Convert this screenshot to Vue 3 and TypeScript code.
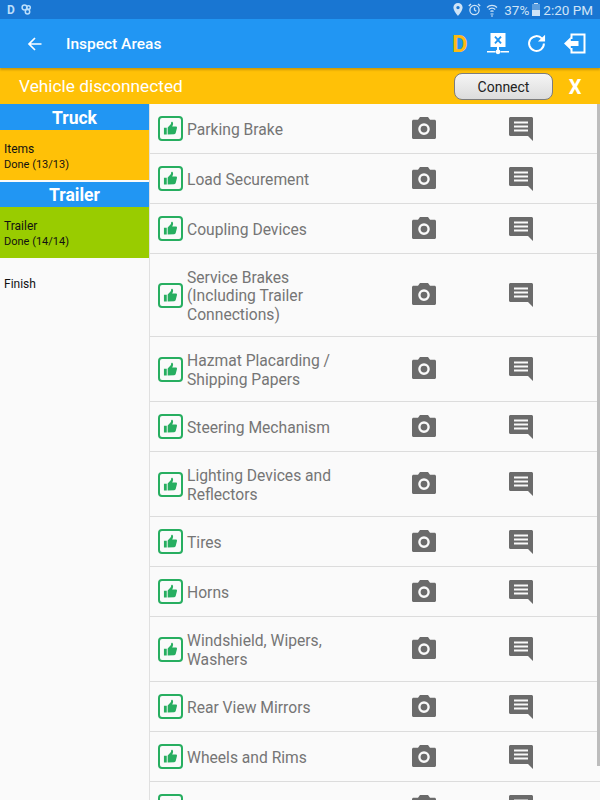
<script setup lang="ts">
interface Row { label: string[]; }
const rows: Row[] = [
  { label: ['Parking Brake'] },
  { label: ['Load Securement'] },
  { label: ['Coupling Devices'] },
  { label: ['Service Brakes', '(Including Trailer', 'Connections)'] },
  { label: ['Hazmat Placarding /', 'Shipping Papers'] },
  { label: ['Steering Mechanism'] },
  { label: ['Lighting Devices and', 'Reflectors'] },
  { label: ['Tires'] },
  { label: ['Horns'] },
  { label: ['Windshield, Wipers,', 'Washers'] },
  { label: ['Rear View Mirrors'] },
  { label: ['Wheels and Rims'] },
  { label: [''] },
];
</script>

<template>
  <div class="page">
    <div class="status">
      <div class="status-left">
        <span class="d">D</span>
        <svg width="11" height="11" viewBox="0 0 11 11" fill="none" stroke="#bbdefb" stroke-width="1.5"><circle cx="3.5" cy="3.5" r="2.4"/><circle cx="7.5" cy="3.5" r="1.8"/><circle cx="6.5" cy="7.8" r="2.2"/></svg>
      </div>
      <div class="status-right">
        <svg width="10" height="13" viewBox="0 0 10 13"><path fill="#cfe4f7" fill-rule="evenodd" d="M5 0a4.600 4.600 0 0 0-4.600 4.600C.4 8 5 13 5 13s4.600-5 4.600-8.400A4.600 4.600 0 0 0 5 0zm0 6.300a1.700 1.700 0 1 1 0-3.400 1.700 1.700 0 0 1 0 3.400z"/></svg>
        <svg class="alarm" width="13" height="13" viewBox="0 0 13 13" fill="none" stroke="#cfe4f7" stroke-width="1.3"><circle cx="6.500" cy="7" r="4.600"/><path d="M6.500 4.500V7l1.800 1.200M.8 3 3 1M12.200 3 10 1"/></svg>
        <svg class="wifi" width="12" height="14" viewBox="0 0 12 14" fill="none" stroke="#cfe4f7" stroke-width="1.200"><path d="M1 4.500a7 7 0 0 1 10 0M2.800 6.500a4.500 4.500 0 0 1 6.400 0M4.500 8.500a2 2 0 0 1 3 0"/><path d="M4.500 11h3M5 13h2"/></svg>
        <span class="pct">37%</span>
        <span class="battery"><span class="cap"></span><span class="cell"><span class="fill"></span></span></span>
        <span class="clock">2:20 PM</span>
      </div>
    </div>

    <header class="toolbar">
      <svg class="back" width="16" height="16" viewBox="0 0 16 16" fill="none" stroke="#fff" stroke-width="1.700"><path d="M14.500 8H2M8 2 2 8l6 6"/></svg>
      <span class="title">Inspect Areas</span>
      <span class="spacer"></span>
      <span class="big-d">D</span>
      <svg class="net" width="22" height="22" viewBox="0 0 22 22">
        <path fill="#fff" fill-rule="evenodd" d="M3.500 0h15v14h-15zM7.300 4.200l2.500 2.800-2.500 2.800 1.300 1.300 2.400-2.700 2.400 2.700 1.300-1.300-2.500-2.800 2.500-2.800-1.300-1.300L11 5.600 8.600 2.900z"/>
        <path fill="#fff" d="M10 14h2v3.500h-2zM0 18h8.500v1.500H0zM13.500 18H22v1.500h-8.500z"/><circle cx="11" cy="18.800" r="2.400" fill="#fff"/>
      </svg>
      <svg class="refresh" width="19" height="19" viewBox="0 0 20 20" fill="none" stroke="#fff" stroke-width="2.100"><path d="M15.800 4.800A7.800 7.800 0 1 0 17.800 10"/><path fill="#fff" stroke="none" d="M11.500 8h7.500V.8z"/></svg>
      <svg class="exit" width="22" height="21" viewBox="0 0 22 21" fill="none" stroke="#fff" stroke-width="2"><path d="M7.500 6V1.500h13v18h-13V15"/><path fill="#fff" stroke="none" d="M0 10.500 6.800 4v4h7.700v5H6.800v4z"/></svg>
    </header>

    <div class="banner">
      <span class="banner-text">Vehicle disconnected</span>
      <button class="connect" type="button">Connect</button>
      <span class="close">X</span>
    </div>

    <main class="body">
      <aside class="side">
        <div class="side-head">Truck</div>
        <div class="side-item amber"><div>Items</div><div class="sub">Done (13/13)</div></div>
        <div class="side-head second">Trailer</div>
        <div class="side-item green"><div>Trailer</div><div class="sub">Done (14/14)</div></div>
        <div class="finish">Finish</div>
      </aside>
      <section class="list">
        <div class="scrollbar"></div>
        <div v-for="(row, i) in rows" :key="i" class="row" :class="'lines-' + row.label.length">
          <span class="thumb-box">
            <svg width="15" height="15" viewBox="0 0 16 16"><path fill="#27ae60" d="M1 7.200h3v7.300H1zM5 14.500V7l3-3.200c.5-.5.700-1.200.700-2.300 0-.8 1-1 1.500-.4.700.8.800 2.200.2 3.500l-.6 1.300h3.900c.9 0 1.400.7 1.200 1.500l-1.300 5.200c-.2.800-.8 1.400-1.700 1.400z"/></svg>
          </span>
          <div class="label">
            <div v-for="line in row.label" :key="line">{{ line }}</div>
          </div>
          <span class="cam">
            <svg width="24" height="22" viewBox="0 0 24 22"><path fill="#6b6b6b" fill-rule="evenodd" d="M8 0h8l2 2.800h4.500c.8 0 1.500.7 1.500 1.500v16.200c0 .8-.7 1.500-1.500 1.500h-21C.7 22 0 21.300 0 20.500V4.300c0-.8.700-1.500 1.500-1.500H6zM12 6.300a5.800 5.800 0 1 0 0 11.600 5.800 5.800 0 0 0 0-11.600zm0 2.400a3.400 3.400 0 1 1 0 6.800 3.400 3.400 0 0 1 0-6.800z"/></svg>
          </span>
          <span class="msg">
            <svg width="24" height="24" viewBox="0 0 24 24"><path fill="#6b6b6b" fill-rule="evenodd" d="M1.500 0h21c.8 0 1.500.7 1.500 1.500V24l-5-5H1.500C.7 19 0 18.300 0 17.500v-16C0 .7.700 0 1.500 0zM5 4.500v2h14v-2zm0 4v2h14v-2zm0 4v2h14v-2z"/></svg>
          </span>
        </div>
      </section>
    </main>
  </div>
</template>

<style scoped>
.page {
  width: 600px;
  height: 800px;
  overflow: hidden;
  display: flex;
  flex-direction: column;
  background: #fafafa;
  font-family: Roboto, "Liberation Sans", sans-serif;
}
.status {
  height: 19px;
  flex: none;
  background: #1976d2;
  color: #cfe4f7;
  display: flex;
  align-items: center;
  justify-content: space-between;
  padding: 0 7px;
  font-size: 13.500px;
}
.status-left, .status-right { display: flex; align-items: center; }
.status-left { gap: 6px; }
.d { font-weight: 700; font-size: 12px; color: #bbdefb; }
.status-right { gap: 5px; }
.pct { margin-left: 1px; }
.battery { display: flex; flex-direction: column; align-items: center; margin: 0 -2px 0 -2px; }
.cap { width: 4px; height: 1px; background: #cfe4f7; }
.cell { display: flex; align-items: flex-end; width: 8px; height: 12px; background: #5d9ede; }
.fill { display: block; width: 100%; height: 6px; background: #cfe4f7; }
.toolbar {
  height: 49px;
  flex: none;
  background: #2196f3;
  display: flex;
  align-items: center;
  padding-left: 27px;
  box-shadow: 0 2px 2px rgba(0, 0, 0, .2);
  position: relative;
  z-index: 1;
}
.title { margin-left: 23px; color: #fff; font-size: 15.500px; font-weight: 500; }
.spacer { flex: 1; }
.big-d { color: #fdb913; font-weight: 700; font-size: 24px; width: 17px; }
.net { margin-left: 18px; }
.refresh { margin-left: 18px; }
.exit { margin-left: 18px; margin-right: 14px; }
.banner {
  height: 36px;
  flex: none;
  background: #ffc107;
  display: flex;
  align-items: center;
}
.banner-text { margin-left: 19px; color: #fff; font-size: 17.300px; flex: 1; }
.connect {
  width: 99px;
  height: 27px;
  margin-top: 1px;
  border: 1px solid #7d7d7d;
  border-radius: 8px;
  background: linear-gradient(#f5f5f5, #dcdcdc);
  font: 14px Roboto, "Liberation Sans", sans-serif;
  color: #222;
  padding: 0;
}
.close { width: 44px; margin-right: 3px; text-align: center; color: #fff; font-size: 20px; font-weight: 700; margin-top: 1px; }
.body { flex: 1; display: flex; min-height: 0; }
.side { width: 149px; flex: none; border-right: 1px solid #e0e0e0; background: #fafafa; }
.side-head {
  height: 26px;
  background: #2196f3;
  color: #fff;
  font-size: 17.500px;
  font-weight: 700;
  display: flex;
  align-items: center;
  justify-content: center;
  padding-top: 1px;
  box-sizing: border-box;
}
.side-head.second { margin-top: 2px; height: 25px; }
.side-item {
  height: 50px;
  font-size: 12px;
  color: #111;
  padding: 11px 4px 0;
  box-sizing: border-box;
  line-height: 16px;
}
.side-item .sub { font-size: 11px; }
.amber { background: #ffc107; }
.green { background: #99cc00; height: 51px; }
.finish { margin-top: 19px; padding-left: 4px; font-size: 12px; color: #111; }
.list { flex: 1; min-width: 0; position: relative; }
.scrollbar { position: absolute; right: 0; top: 0; bottom: 34px; width: 3px; background: #bdbdbd; z-index: 1; }
.row {
  display: flex;
  align-items: center;
  height: 50px;
  padding-left: 8px;
  box-sizing: border-box;
  border-bottom: 1px solid #dcdcdc;
}
.row.lines-2 { height: 65px; }
.row.lines-3 { height: 83px; }
.thumb-box {
  width: 25px;
  height: 25px;
  flex: none;
  box-sizing: border-box;
  border: 2px solid #27ae60;
  border-radius: 4px;
  display: flex;
  align-items: center;
  justify-content: center;
}
.label { width: 225px; flex: none; margin-left: 4px; padding-top: 3px; font-size: 15.650px; line-height: 18.600px; color: #757575; }
.cam, .msg { display: flex; flex: none; margin-top: -2px; }
.msg { margin-left: 73px; margin-top: 0; }
</style>

<style>
html, body { margin: 0; overflow: hidden; }
</style>
